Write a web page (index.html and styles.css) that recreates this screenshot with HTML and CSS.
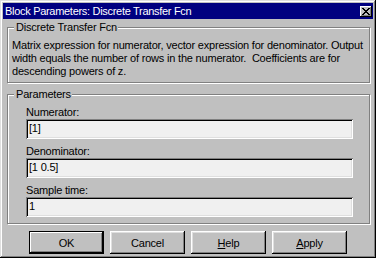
FILE: index.html
```html
<!DOCTYPE html>
<html>
<head>
<title>Block Parameters: Discrete Transfer Fcn</title>
<link rel="stylesheet" href="styles.css">
</head>
<body>

<div class="window">
	<div class="titlebar">
		<span class="title">Block Parameters: Discrete Transfer Fcn</span>
		<button class="close" aria-label="Close">
			<svg width="8" height="7" viewBox="0 0 8 7">
				<path d="M0 0h2v1h1v1h2v-1h1v-1h2v1h-1v1h-1v1h-1v1h1v1h1v1h1v1h-2v-1h-1v-1h-2v1h-1v1h-2v-1h1v-1h1v-1h1v-1h-1v-1h-1v-1h-1z" fill="#000"/>
			</svg>
		</button>
	</div>

	<div class="content">
		<fieldset class="group desc">
			<legend>Discrete Transfer Fcn</legend>
			<p class="info">Matrix expression for numerator, vector expression for denominator. Output<br>width equals the number of rows in the numerator.&nbsp; Coefficients are for<br>descending powers of z.</p>
		</fieldset>

		<fieldset class="group params">
			<legend>Parameters</legend>
			<div class="fields">
				<label class="field">
					<span class="label">Numerator:</span>
					<span class="edit">[1]</span>
				</label>
				<label class="field">
					<span class="label">Denominator:</span>
					<span class="edit">[1 0.5]</span>
				</label>
				<label class="field">
					<span class="label">Sample time:</span>
					<span class="edit">1</span>
				</label>
			</div>
		</fieldset>

		<div class="buttons">
			<button class="btn default">OK</button>
			<button class="btn">Cancel</button>
			<button class="btn"><u>H</u>elp</button>
			<button class="btn"><u>A</u>pply</button>
		</div>
	</div>
</div>

</body>
</html>
```

FILE: styles.css
```css
body, html {
	margin: 0;
	padding: 0;
	font-family: "Liberation Sans", Arial, sans-serif;
	font-size: 11px;
	line-height: 13px;
	letter-spacing: -0.2px;
	color: #000;
	background: #c0c0c0;
}

.window {
	box-sizing: border-box;
	width: 376px;
	height: 258px;
	padding: 3px;
	background: #c0c0c0;
	box-shadow: inset -1px -1px #000, inset 1px 1px #dfdfdf, inset -2px -2px #808080, inset 2px 2px #fff;
	display: flex;
	flex-direction: column;
}

.titlebar {
	height: 16px;
	background: #000080;
	color: #fff;
	display: flex;
	align-items: center;
	justify-content: space-between;
	padding: 0 1px 0 2px;
}

.title {
	letter-spacing: -0.3px;
}

.close {
	width: 12px;
	height: 11px;
	padding: 0;
	border: none;
	background: #c0c0c0;
	box-shadow: inset -1px -1px #000, inset 1px 1px #fff, inset -2px -2px #808080;
	display: flex;
	align-items: center;
	justify-content: center;
}

.close svg {
	display: block;
}

.content {
	padding: 0 3px 0 4px;
	display: flex;
	flex-direction: column;
}

.group {
	margin: 0;
	padding: 0;
	min-width: 0;
	border: 1px solid #808080;
	box-shadow: 1px 1px 0 #fff, inset 1px 1px 0 #fff;
}

.group legend {
	margin-left: 6px;
	padding: 0 1px 0 2px;
	background: #c0c0c0;
	line-height: 13px;
}

.desc {
	margin-top: 2px;
}

.info {
	margin: 5px 0 4px 0;
	padding-left: 4px;
	white-space: nowrap;
}

.params {
	margin-top: 5px;
}

.fields {
	display: flex;
	flex-direction: column;
	gap: 6px;
	padding: 5px 16px 6px 18px;
}

.field {
	display: flex;
	flex-direction: column;
}

.edit {
	box-sizing: border-box;
	height: 20px;
	padding: 3px 3px 0 3px;
	background: #f0f0f0;
	box-shadow: inset 1px 1px #808080, inset -1px -1px #fff, inset 2px 2px #000, inset -2px -2px #dfdfdf;
}

.buttons {
	display: flex;
	gap: 6px;
	padding: 7px 0 0 22px;
}

.btn {
	box-sizing: border-box;
	width: 75px;
	height: 23px;
	padding: 0;
	border: none;
	background: #c0c0c0;
	font-family: inherit;
	font-size: 11px;
	letter-spacing: inherit;
	color: #000;
	box-shadow: inset -1px -1px #000, inset 1px 1px #fff, inset -2px -2px #808080, inset 2px 2px #dfdfdf;
}

.btn.default {
	box-shadow: inset 0 0 0 1px #000, inset -2px -2px #000, inset 2px 2px #fff, inset -3px -3px #808080;
}

.btn u {
	text-decoration: underline;
}
```
